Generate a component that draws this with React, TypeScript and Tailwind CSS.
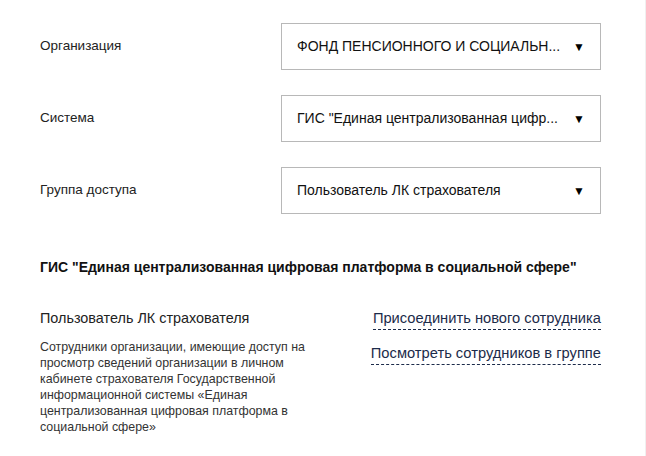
const rows = [
  { label: "Организация", value: "ФОНД ПЕНСИОННОГО И СОЦИАЛЬН..." },
  { label: "Система", value: 'ГИС "Единая централизованная цифр...' },
  { label: "Группа доступа", value: "Пользователь ЛК страхователя" },
];

function SelectRow({ label, value }: { label: string; value: string }) {
  return (
    <div className="flex items-center h-[47px]">
      <div className="w-[241px] text-[13.5px] text-[#222]">{label}</div>
      <div className="w-[320px] h-[47px] border border-[#b8b8b8] flex items-center pl-[15px] pr-[15px] gap-3">
        <span className="flex-1 truncate text-[14px] text-[#111]">{value}</span>
        <span className="text-[12px] text-black leading-none">▼</span>
      </div>
    </div>
  );
}

export default function App() {
  return (
    <div
      className="w-[646px] h-[456px] bg-white border-r border-[#f0f0f0] overflow-hidden"
      style={{ fontFamily: '"Liberation Sans", Arial, sans-serif' }}
    >
      <div className="pl-10 pt-[23px] w-[601px]">
        <div className="flex flex-col gap-[25px]">
          {rows.map((r) => (
            <SelectRow key={r.label} label={r.label} value={r.value} />
          ))}
        </div>

        <h2 className="mt-[43px] text-[14px] font-bold text-[#111] leading-[20px]">
          ГИС "Единая централизованная цифровая платформа в социальной сфере"
        </h2>

        <div className="flex justify-between mt-[31px]">
          <div className="w-[280px]">
            <div className="text-[14.4px] text-[#222] leading-[20px]">Пользователь ЛК страхователя</div>
            <p className="mt-[11px] text-[12.4px] leading-[16px] text-[#333]">
              Сотрудники организации, имеющие доступ на просмотр сведений организации в личном кабинете страхователя Государственной информационной системы «Единая централизованная цифровая платформа в социальной сфере»
            </p>
          </div>
          <div className="flex flex-col items-end gap-[14px] pt-[1px]">
            <a className="text-[14.7px] leading-[18px] pb-[2px] text-[#1c2b4a] border-b border-dashed border-[#1c2b4a] cursor-pointer">
              Присоединить нового сотрудника
            </a>
            <a className="text-[14.7px] leading-[18px] pb-[2px] text-[#1c2b4a] border-b border-dashed border-[#1c2b4a] cursor-pointer">
              Посмотреть сотрудников в группе
            </a>
          </div>
        </div>
      </div>
    </div>
  );
}
